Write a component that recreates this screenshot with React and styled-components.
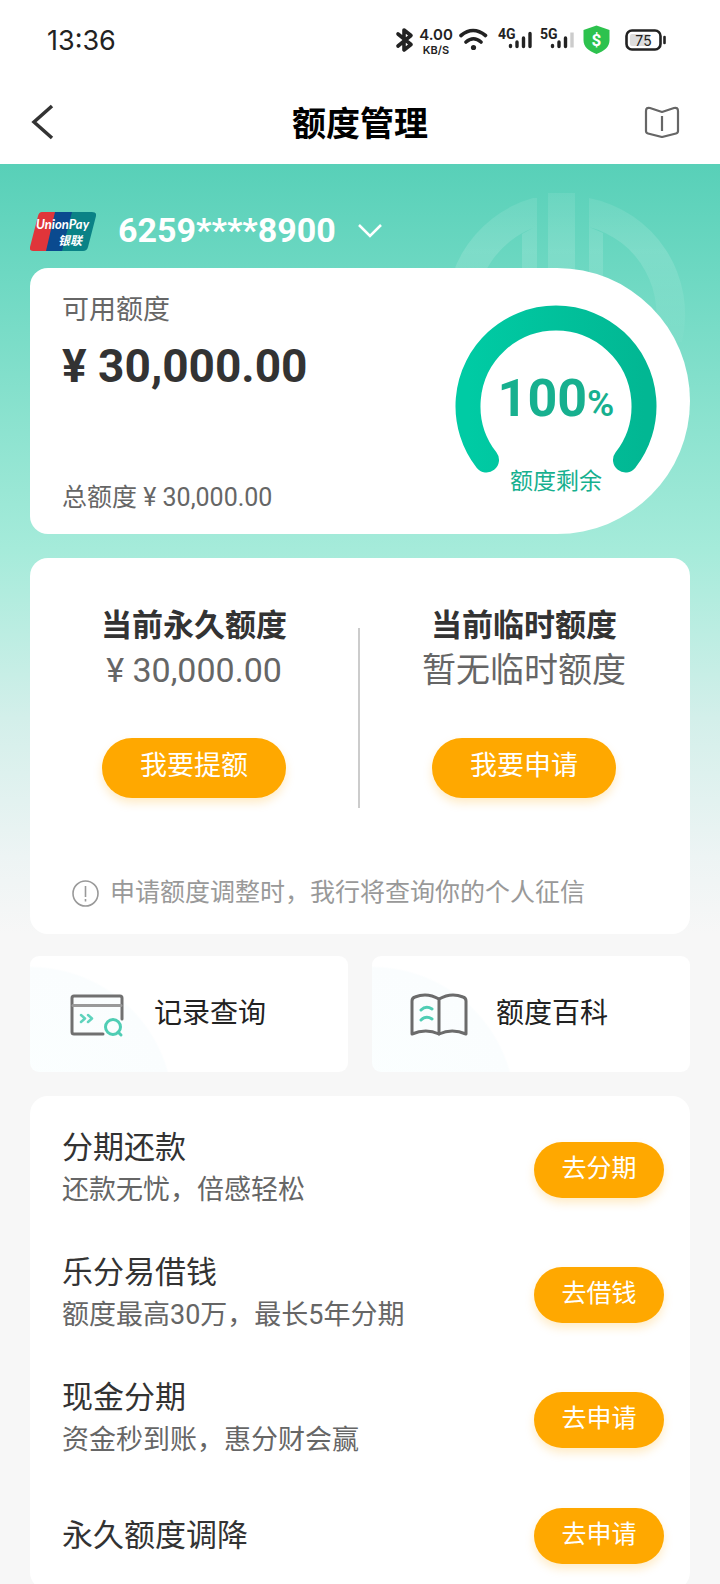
import React from "react";
import styled, { createGlobalStyle } from "styled-components";

const GlobalStyle = createGlobalStyle`
  * {
    box-sizing: border-box;
  }

  body {
    margin: 0;
    background: #f7f7f7;
    color: #333;
    font-family: Roboto, "Noto Sans CJK SC", sans-serif;
  }

  h1, h2, h3, p, ul {
    margin: 0;
    padding: 0;
    font-weight: 400;
  }

  button {
    border: none;
    padding: 0;
    background: none;
    font-family: inherit;
    cursor: pointer;
  }

  svg {
    display: block;
    flex-shrink: 0;
  }
`;

// Page shell
const Screen = styled.div`
  display: flex;
  flex-direction: column;
  height: 100vh;
`;

const StatusBar = styled.div`
  display: flex;
  justify-content: space-between;
  align-items: center;
  height: 80px;
  padding: 0 54px 0 47px;
  background: #fff;
  flex-shrink: 0;
`;

const Clock = styled.span`
  padding-top: 2px;
  font-family: Inter, sans-serif;
  font-size: 27px;
  line-height: 36px;
  color: #222;
`;

const NavBar = styled.header`
  display: grid;
  grid-template-columns: 80px 1fr 80px;
  align-items: center;
  height: 84px;
  background: #fff;
  flex-shrink: 0;
`;

const NavTitle = styled.h1`
  padding-top: 3px;
  font-size: 34px;
  line-height: 48px;
  font-weight: 700;
  color: #000;
  text-align: center;
`;

const NavButton = styled.button`
  justify-self: ${({ $end }) => ($end ? "end" : "start")};
  padding: ${({ $end }) => ($end ? "0 40px 0 0" : "0 0 0 30px")};
`;

const Content = styled.main`
  position: relative;
  flex: 1;
  padding: 28px 30px 0;
  overflow-y: auto;
  scrollbar-width: none;
  background: linear-gradient(#58d0b8 0%, #6dd8c2 14%, #a5ebda 50%, #d3efea 72%, #edf4f4 90%, #f7f7f7 100%)
    no-repeat top / 100% 770px;
`;

const Watermark = styled.svg`
  position: absolute;
  top: 28px;
  right: 34px;
`;

// Account picker
const Account = styled.button`
  position: relative;
  display: flex;
  align-items: center;
  height: 76px;
  gap: 22px;
  color: #fff;
`;

const CardNumber = styled.span`
  font-size: 34px;
  line-height: 40px;
  font-weight: 700;
`;

// Available limit
const Summary = styled.section`
  position: relative;
  display: flex;
  justify-content: space-between;
  height: 266px;
  padding-right: 33px;
  background: #fff;
  border-radius: 18px 133px 133px 18px;
`;

const SummaryText = styled.div`
  display: flex;
  flex-direction: column;
  padding: 23px 0 21px 32px;
`;

const SummaryLabel = styled.h2`
  font-size: 27px;
  line-height: 38px;
  color: #666;
`;

const Available = styled.p`
  margin-top: 9px;
  font-size: 46px;
  line-height: 56px;
  font-weight: 700;
`;

const Total = styled.p`
  margin-top: auto;
  font-size: 25px;
  line-height: 30px;
  color: #666;
`;

const GaugeBox = styled.div`
  display: grid;
  width: 202px;
  margin-top: 36px;

  > * {
    grid-area: 1 / 1;
  }
`;

const GaugeText = styled.div`
  display: flex;
  flex-direction: column;
  align-items: center;
  padding-top: 65px;
  color: #17b08f;
`;

const Percent = styled.strong`
  font-size: 52px;
  line-height: 60px;

  small {
    font-size: 37px;
    font-weight: 600;
  }
`;

const GaugeLabel = styled.span`
  margin-top: 30px;
  font-size: 23px;
  line-height: 36px;
`;

// Permanent and temporary limits
const Panel = styled.section`
  margin-top: 24px;
  background: #fff;
  border-radius: 18px;
`;

const Limits = styled.div`
  display: grid;
  grid-template-columns: 1fr 2px 1fr;
  padding: 48px 2px 0 0;
`;

const Limit = styled.div`
  display: flex;
  flex-direction: column;
  align-items: center;
`;

const LimitTitle = styled.h2`
  font-size: 31px;
  line-height: 40px;
  font-weight: 700;
`;

const LimitValue = styled.p`
  margin-bottom: 44px;
  font-size: 34px;
  line-height: 48px;
  color: #666;
`;

const Divider = styled.div`
  height: 180px;
  margin-top: 22px;
  background: #ccc;
`;

const Pill = styled.button`
  width: ${({ $large }) => ($large ? 184 : 130)}px;
  height: ${({ $large }) => ($large ? 60 : 56)}px;
  padding-bottom: ${({ $large }) => ($large ? 5 : 2)}px;
  flex-shrink: 0;
  border-radius: 30px;
  background: #ffa800;
  box-shadow: 0 5px 10px rgba(255, 168, 0, 0.22);
  color: #fff;
  font-size: ${({ $large }) => ($large ? 27 : 25)}px;
  line-height: 36px;
`;

const Notice = styled.p`
  display: flex;
  align-items: center;
  gap: 11px;
  padding: 67px 42px 23px;
  font-size: 25px;
  line-height: 36px;
  color: #999;
`;

// Shortcuts
const Shortcuts = styled.nav`
  display: grid;
  grid-template-columns: 1fr 1fr;
  gap: 24px;
  margin-top: 22px;
`;

const Shortcut = styled.a`
  display: flex;
  align-items: center;
  gap: 28px;
  height: 116px;
  padding: 2px 0 0 38px;
  border-radius: 9px;
  background: radial-gradient(circle at 0 154px, #fbffff 0, #fafdfe 142px, #fff 144px);
  color: #222;
  font-size: 28px;
  line-height: 40px;
  text-decoration: none;

  span {
    padding-bottom: 3px;
  }
`;

// Services
const Services = styled.ul`
  margin-top: 24px;
  padding: 11px 26px 0 32px;
  background: #fff;
  border-radius: 18px;
  list-style: none;
`;

const Service = styled.li`
  display: flex;
  justify-content: space-between;
  align-items: center;
  height: ${({ $short }) => ($short ? 108 : 125)}px;
`;

const ServiceTitle = styled.h3`
  font-size: 31px;
  line-height: 42px;
`;

const ServiceNote = styled.p`
  padding-bottom: 2px;
  font-size: 27px;
  line-height: 42px;
  color: #666;
`;

const services = [
  { title: "分期还款", note: "还款无忧，倍感轻松", action: "去分期" },
  { title: "乐分易借钱", note: "额度最高30万，最长5年分期", action: "去借钱" },
  { title: "现金分期", note: "资金秒到账，惠分财会赢", action: "去申请" },
  { title: "永久额度调降", action: "去申请" },
];

function SystemIcons() {
  return (
    <svg width="274" height="32" viewBox="392 24 274 32" fill="none" stroke="#222">
      {/* bluetooth */}
      <path d="M398 34l13 10.500-7 5.500V30l7 5.500L398 46" strokeWidth="3.600" strokeLinejoin="round" strokeLinecap="round" />
      <g fill="#222" stroke="none" fontFamily="Inter, sans-serif">
        <text x="436" y="40" fontSize="15" fontWeight="600" textAnchor="middle">4.00</text>
        <text x="436" y="54" fontSize="11" fontWeight="600" textAnchor="middle">KB/S</text>
      </g>
      {/* wifi */}
      <path d="M461 35.500q12-10 24.500 0M466 42q7.500-6.500 15 0" strokeWidth="3.600" strokeLinecap="round" />
      <circle cx="473.500" cy="47.500" r="2.600" fill="#222" stroke="none" />
      <g fill="#222" stroke="none" fontFamily="Roboto, sans-serif" fontWeight="700" fontSize="14">
        <text x="498" y="39">4G</text>
        <text x="540" y="39">5G</text>
      </g>
      <g strokeWidth="3.400" strokeLinecap="round">
        <path d="M510.500 45.500v1M517 42v4.500M523.500 38v8.500M530 33.500v13" />
        <path d="M552.500 45.500v1M559 42v4.500M565.500 38v8.500" />
        <path d="M572 32.500v15" stroke="#ccc" strokeLinecap="butt" />
      </g>
      <path d="M596.500 25.500l13 4.500v10c0 7-5 11-13 14-8-3-13-7-13-14V30z" fill="#2dc24e" stroke="none" />
      <text x="596.500" y="46" fontSize="17" fontWeight="700" fontFamily="Roboto, sans-serif" fill="#fff" stroke="none" textAnchor="middle">$</text>
      {/* battery */}
      <rect x="626.500" y="30.500" width="34" height="19" rx="5.500" strokeWidth="2.600" />
      <rect x="630" y="34" width="20" height="12" rx="2" fill="#ddd" stroke="none" />
      <path d="M664.500 37v6" strokeWidth="2.600" strokeLinecap="round" />
      <text x="643.500" y="45.500" fontSize="14" fontFamily="Inter, sans-serif" fill="#222" stroke="none" textAnchor="middle">75</text>
    </svg>
  );
}

function UnionPayLogo() {
  return (
    <svg width="66" height="44" viewBox="0 -4 66 44">
      <path d="M12 0h19l-9 39H3q-4 0-3-4L8 4q1-4 4-4z" fill="#e0353a" />
      <path d="M25 0h21l-9 39H16z" fill="#0a4a8f" />
      <path d="M42 0h20q5 0 4 4l-8 31q-1 4-5 4H32z" fill="#0a8286" />
      <g fill="#fff" fontWeight="700" fontStyle="italic">
        <text x="6" y="17" fontSize="13" fontFamily="Lato, sans-serif">UnionPay</text>
        <text x="28" y="33" fontSize="12" fontFamily="Noto Sans CJK SC, sans-serif">银联</text>
      </g>
    </svg>
  );
}

function Gauge() {
  return (
    <GaugeBox>
      <svg width="202" height="172" viewBox="0 0 202 172" fill="none">
        <defs>
          <linearGradient id="gauge" x1="0" y1="0" x2="1" y2="0">
            <stop offset="0" stopColor="#00cba4" />
            <stop offset="1" stopColor="#02b793" />
          </linearGradient>
        </defs>
        <path d="M31.500 156A88 88 0 1 1 170.500 156" stroke="url(#gauge)" strokeWidth="25" strokeLinecap="round" />
      </svg>
      <GaugeText>
        <Percent>
          100<small>%</small>
        </Percent>
        <GaugeLabel>额度剩余</GaugeLabel>
      </GaugeText>
    </GaugeBox>
  );
}

function RecordIcon() {
  return (
    <svg width="58" height="46" viewBox="0 0 58 46" fill="none" strokeLinecap="round" strokeLinejoin="round">
      <path d="M54 27V6q0-2-2-2H6Q4 4 4 6v34q0 2 2 2h29" stroke="#707070" strokeWidth="3" />
      <path d="M5 13.500h48" stroke="#999" strokeWidth="3" />
      <path d="M13 23l4 3.500-4 3.500M20 23l4 3.500-4 3.500" stroke="#5fd3bd" strokeWidth="2.500" />
      <circle cx="45" cy="35" r="7.500" stroke="#4fcdb4" strokeWidth="3" />
      <path d="M50 40l3 3" stroke="#4fcdb4" strokeWidth="3" />
    </svg>
  );
}

function WikiIcon() {
  return (
    <svg width="58" height="46" viewBox="0 0 58 46" fill="none" strokeLinecap="round" strokeLinejoin="round">
      <path d="M29 7Q17 0 5 5q-3 1-3 4v33q14-6 27 0 13-6 27 0V9q0-3-3-4-12-5-24 2z" stroke="#6b6b6b" strokeWidth="3" />
      <path d="M29 7v35" stroke="#6b6b6b" strokeWidth="3" />
      <path d="M11 18q5-5 11-1M11 28q5-5 11-1" stroke="#4fcdb4" strokeWidth="3" />
    </svg>
  );
}

export default function App() {
  return (
    <Screen>
      <GlobalStyle />
      <StatusBar>
        <Clock>13:36</Clock>
        <SystemIcons />
      </StatusBar>

      <NavBar>
        <NavButton aria-label="返回">
          <svg width="26" height="36" viewBox="0 0 26 36" fill="none" stroke="#333" strokeWidth="3.500">
            <path d="M22 2L4 18l18 16" />
          </svg>
        </NavButton>
        <NavTitle>额度管理</NavTitle>
        <NavButton $end aria-label="说明">
          <svg width="36" height="32" viewBox="0 0 36 32" fill="none" stroke="#666" strokeWidth="2.200" strokeLinejoin="round">
            <path d="M18 6L6 2Q2 1 2 5v20q0 2 2 2.500L18 31l14-3.500q2-.5 2-2.500V5q0-4-4-3z" />
            <path d="M18 10v15" />
          </svg>
        </NavButton>
      </NavBar>

      <Content>
        <Watermark width="240" height="240" viewBox="0 0 240 240" fill="none">
          <defs>
            <linearGradient id="fade" gradientUnits="userSpaceOnUse" x1="0" y1="0" x2="0" y2="150">
              <stop offset="0" stopColor="#fff" stopOpacity="0.08" />
              <stop offset="0.4" stopColor="#fff" stopOpacity="0.14" />
              <stop offset="1" stopColor="#fff" stopOpacity="0.02" />
            </linearGradient>
          </defs>
          <g fill="url(#fade)">
            <path d="M87 6v30A90 90 0 0 0 30 120v30H4A119 119 0 0 1 87 6z" />
            <path d="M143 6A119 119 0 0 1 236 150h-30A90 90 0 0 0 143 35z" />
            <path d="M76 42l11-6V6h4v144H76zM102 1h27v149h-27zM143 35l14 6v109h-14z" />
          </g>
        </Watermark>

        <Account>
          <UnionPayLogo />
          <CardNumber>6259****8900</CardNumber>
          <svg width="24" height="16" viewBox="0 -2 24 16" fill="none" stroke="#fff" strokeWidth="2.500">
            <path d="M1 1l11 11L23 1" />
          </svg>
        </Account>

        <Summary>
          <SummaryText>
            <SummaryLabel>可用额度</SummaryLabel>
            <Available>¥ 30,000.00</Available>
            <Total>总额度 ¥ 30,000.00</Total>
          </SummaryText>
          <Gauge />
        </Summary>

        <Panel>
          <Limits>
            <Limit>
              <LimitTitle>当前永久额度</LimitTitle>
              <LimitValue>¥ 30,000.00</LimitValue>
              <Pill $large>我要提额</Pill>
            </Limit>
            <Divider />
            <Limit>
              <LimitTitle>当前临时额度</LimitTitle>
              <LimitValue>暂无临时额度</LimitValue>
              <Pill $large>我要申请</Pill>
            </Limit>
          </Limits>
          <Notice>
            <svg width="27" height="27" viewBox="0 0 27 27" fill="none" stroke="#999" strokeWidth="1.600">
              <circle cx="13.500" cy="13.500" r="12.500" />
              <path d="M13.500 6v11M13.500 19v2.500" />
            </svg>
            申请额度调整时，我行将查询你的个人征信
          </Notice>
        </Panel>

        <Shortcuts>
          <Shortcut href="#records">
            <RecordIcon />
            <span>记录查询</span>
          </Shortcut>
          <Shortcut href="#wiki">
            <WikiIcon />
            <span>额度百科</span>
          </Shortcut>
        </Shortcuts>

        <Services>
          {services.map(({ title, note, action }) => (
            <Service key={title} $short={!note}>
              <div>
                <ServiceTitle>{title}</ServiceTitle>
                {note && <ServiceNote>{note}</ServiceNote>}
              </div>
              <Pill>{action}</Pill>
            </Service>
          ))}
        </Services>
      </Content>
    </Screen>
  );
}
